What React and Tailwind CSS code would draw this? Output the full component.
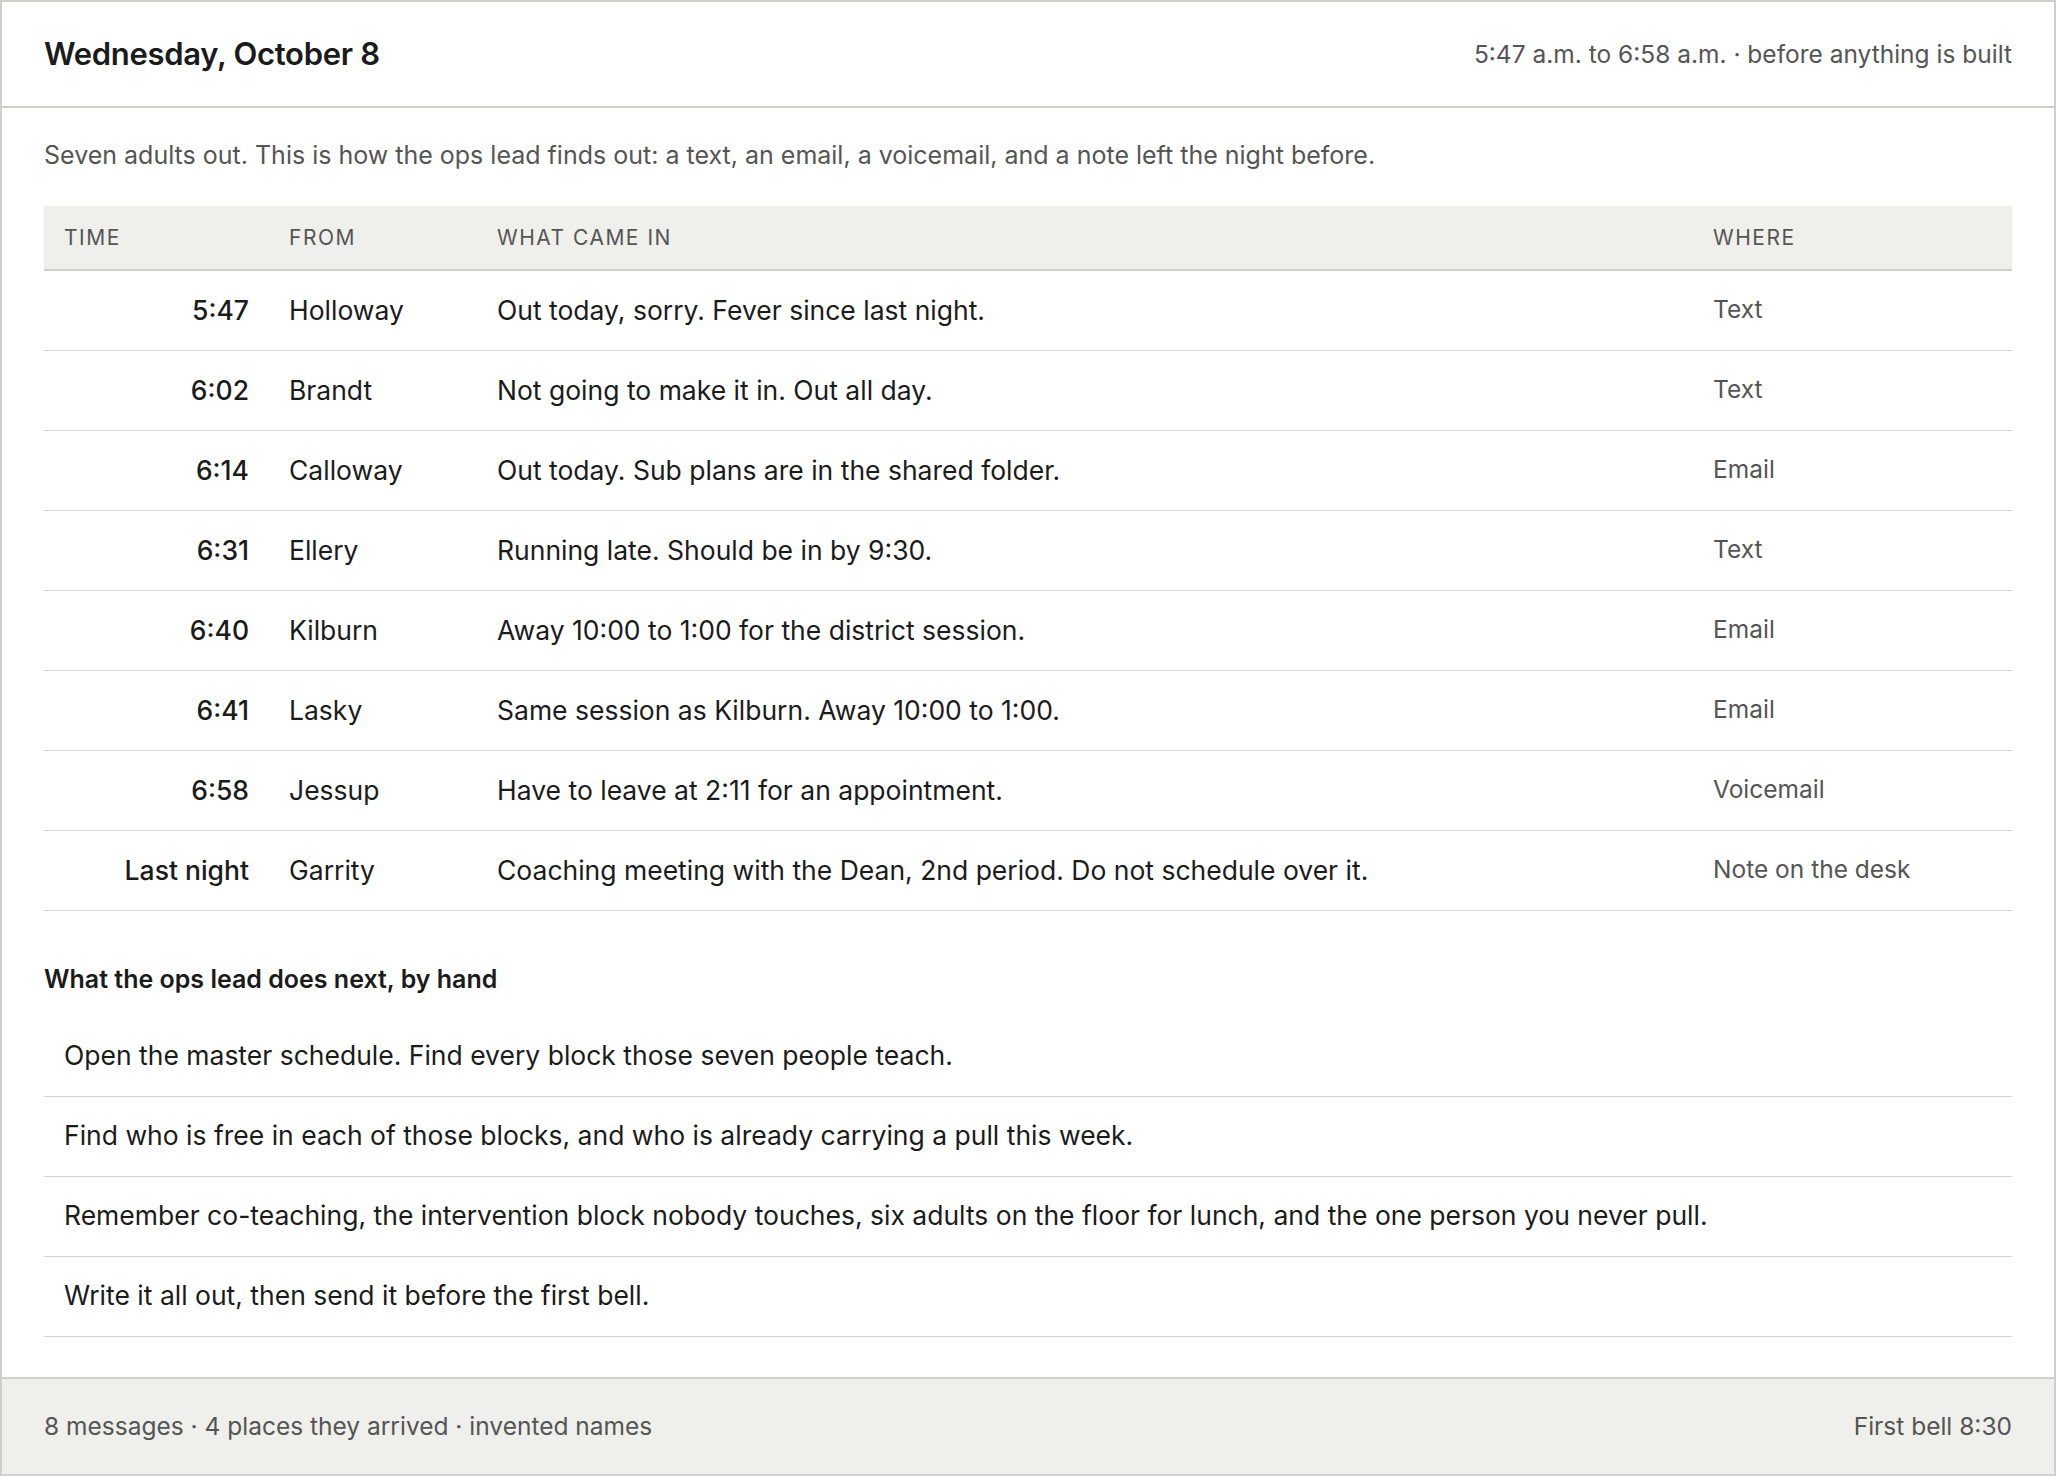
export default function App() {
  const rows = [
    ["5:47", "Holloway", "Out today, sorry. Fever since last night.", "Text"],
    ["6:02", "Brandt", "Not going to make it in. Out all day.", "Text"],
    ["6:14", "Calloway", "Out today. Sub plans are in the shared folder.", "Email"],
    ["6:31", "Ellery", "Running late. Should be in by 9:30.", "Text"],
    ["6:40", "Kilburn", "Away 10:00 to 1:00 for the district session.", "Email"],
    ["6:41", "Lasky", "Same session as Kilburn. Away 10:00 to 1:00.", "Email"],
    ["6:58", "Jessup", "Have to leave at 2:11 for an appointment.", "Voicemail"],
    ["Last night", "Garrity", "Coaching meeting with the Dean, 2nd period. Do not schedule over it.", "Note on the desk"],
  ];
  const steps = [
    "Open the master schedule. Find every block those seven people teach.",
    "Find who is free in each of those blocks, and who is already carrying a pull this week.",
    "Remember co-teaching, the intervention block nobody touches, six adults on the floor for lunch, and the one person you never pull.",
    "Write it all out, then send it before the first bell.",
  ];
  const grid = "grid grid-cols-[225px_208px_1216px_1fr]";
  return (
    <div className="w-[2056px] h-[1476px] flex flex-col bg-white border-2 border-[#cfcfcb] text-[#1b1b1b]" style={{ fontFamily: "Inter, 'Noto Sans', sans-serif" }}>
      <div className="h-[106px] shrink-0 flex items-center justify-between px-[42px] border-b-2 border-[#cfcfcb]">
        <div className="text-[31px] font-semibold tracking-[-0.3px]">Wednesday, October 8</div>
        <div className="text-[24.5px] text-[#555]">5:47 a.m. to 6:58 a.m. · before anything is built</div>
      </div>
      <div className="flex-1 px-[42px] pt-[28px]">
        <div className="text-[25px] text-[#555] h-[40px] flex items-center">Seven adults out. This is how the ops lead finds out: a text, an email, a voicemail, and a note left the night before.</div>
        <div className={`${grid} mt-[30px] h-[65px] items-center bg-[#efefeb] border-b-2 border-[#cfcfcb] text-[21px] tracking-[1.5px] text-[#555] uppercase`}>
          <div className="pl-[20px]">Time</div>
          <div className="pl-[20px]">From</div>
          <div className="pl-[20px]">What came in</div>
          <div className="pl-[20px]">Where</div>
        </div>
        {rows.map((r, i) => (
          <div key={i} className={`${grid} h-[80px] items-center border-b border-[#d4d4d0] text-[26.5px]`}>
            <div className="text-right pr-[20px] font-medium">{r[0]}</div>
            <div className="pl-[20px]">{r[1]}</div>
            <div className="pl-[20px]">{r[2]}</div>
            <div className="pl-[20px] text-[24.5px] text-[#555] -mt-[2px]">{r[3]}</div>
          </div>
        ))}
        <div className="mt-[50px] text-[25px] font-semibold">What the ops lead does next, by hand</div>
        <div className="mt-[18px]">
          {steps.map((s, i) => (
            <div key={i} className="h-[80px] flex items-center pl-[20px] border-b border-[#d4d4d0] text-[26.5px]">{s}</div>
          ))}
        </div>
      </div>
      <div className="h-[97px] shrink-0 flex items-center justify-between px-[42px] bg-[#efefeb] border-t-2 border-[#cfcfcb] text-[24.5px] text-[#555]">
        <div>8 messages · 4 places they arrived · invented names</div>
        <div>First bell 8:30</div>
      </div>
    </div>
  );
}
